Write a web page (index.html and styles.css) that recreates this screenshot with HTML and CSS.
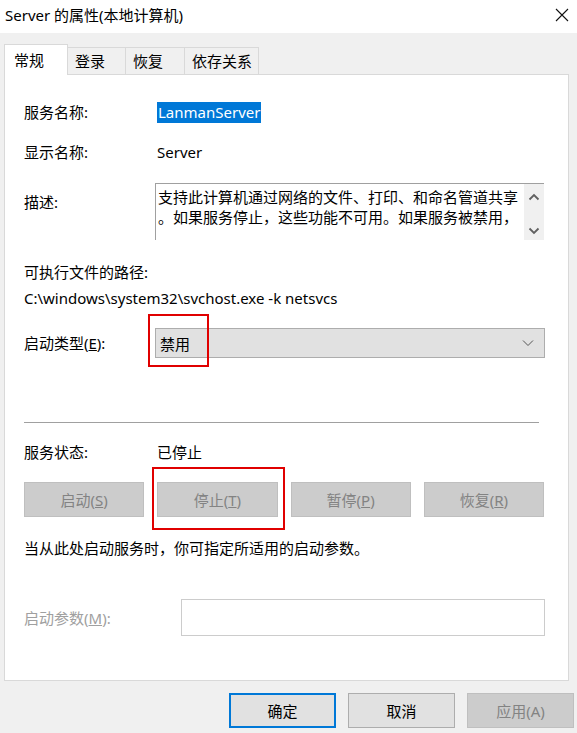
FILE: index.html
```html
<!DOCTYPE html>
<html lang="zh-CN">
<head>
    <meta charset="UTF-8">
    <meta name="viewport" content="width=device-width, initial-scale=1.0">
    <title>Server 的属性(本地计算机)</title>
    <link rel="stylesheet" href="styles.css">
</head>
<body>
    <div class="window">
        <header class="titlebar">
            <span class="title">Server 的属性(本地计算机)</span>
            <svg class="close" width="14" height="14" viewBox="0 0 14 14">
                <path d="M1 1 L13 13 M13 1 L1 13" stroke="#111" stroke-width="1.1" fill="none"/>
            </svg>
        </header>

        <nav class="tabs">
            <div class="tab active">常规</div>
            <div class="tab tab-login">登录</div>
            <div class="tab tab-recover">恢复</div>
            <div class="tab tab-deps">依存关系</div>
        </nav>

        <section class="panel">
            <div class="field">
                <span class="label">服务名称:</span>
                <span class="value"><span class="selected-text">LanmanServer</span></span>
            </div>

            <div class="field gap-18">
                <span class="label">显示名称:</span>
                <span class="value">Server</span>
            </div>

            <div class="field field-top gap-20">
                <span class="label label-desc">描述:</span>
                <div class="desc-box">
                    <div class="desc-text">
                        <div>支持此计算机通过网络的文件、打印、和命名管道共享</div>
                        <div>。如果服务停止，这些功能不可用。如果服务被禁用，</div>
                    </div>
                    <div class="scrollbar">
                        <svg width="12" height="8" viewBox="0 0 12 8"><path d="M1.5 6.5 L6 2 L10.5 6.5" stroke="#606060" stroke-width="1.8" fill="none"/></svg>
                        <svg width="12" height="8" viewBox="0 0 12 8"><path d="M1.5 1.5 L6 6 L10.5 1.5" stroke="#606060" stroke-width="1.8" fill="none"/></svg>
                    </div>
                </div>
            </div>

            <div class="line gap-21">可执行文件的路径:</div>
            <div class="line gap-4">C:\windows\system32\svchost.exe -k netsvcs</div>

            <div class="field gap-19">
                <span class="label">启动类型(<u>E</u>):</span>
                <div class="select">
                    <span>禁用</span>
                    <svg width="12" height="8" viewBox="0 0 12 8"><path d="M1 1.5 L6 6.5 L11 1.5" stroke="#555" stroke-width="1" fill="none"/></svg>
                    <div class="mark mark-type"></div>
                </div>
            </div>

            <div class="separator"></div>

            <div class="field gap-18">
                <span class="label">服务状态:</span>
                <span class="value">已停止</span>
            </div>

            <div class="svc-buttons">
                <button class="btn disabled">启动(<u>S</u>)</button>
                <button class="btn disabled btn-stop">停止(<u>T</u>)<span class="mark mark-stop"></span></button>
                <button class="btn disabled">暂停(<u>P</u>)</button>
                <button class="btn disabled">恢复(<u>R</u>)</button>
            </div>

            <div class="line gap-20">当从此处启动服务时，你可指定所适用的启动参数。</div>

            <div class="field gap-40">
                <span class="label label-param">启动参数(<u>M</u>):</span>
                <div class="param-input"></div>
            </div>
        </section>

        <footer class="actions">
            <button class="btn primary">确定</button>
            <button class="btn">取消</button>
            <button class="btn disabled">应用(A)</button>
        </footer>
    </div>
</body>
</html>
```

FILE: styles.css
```css
/* Estilos generales */
* {
    margin: 0;
    padding: 0;
    box-sizing: border-box;
}

body {
    font-family: "Noto Sans", "Noto Sans CJK SC", sans-serif;
    font-size: 15px;
    color: #000;
    background: #f0f0f0;
}

.window {
    width: 577px;
    height: 733px;
    background: #f0f0f0;
}

/* Barra de título */
.titlebar {
    height: 33px;
    background: #fff;
    display: flex;
    align-items: center;
    justify-content: space-between;
    padding: 0 8px 3px 5px;
}

.title {
    line-height: 20px;
}

/* Pestañas */
.tabs {
    display: flex;
    align-items: flex-end;
    height: 30px;
    margin-top: 11px;
    padding-left: 4px;
}

.tab {
    height: 27px;
    line-height: 26px;
    padding-left: 7px;
    background: #f0f0f0;
    border: 1px solid #d9d9d9;
    border-bottom: none;
    margin-left: -1px;
}

.tab.active {
    position: relative;
    z-index: 1;
    width: 64px;
    height: 31px;
    line-height: 30px;
    padding-left: 9px;
    margin-left: 0;
    margin-bottom: -1px;
    background: #fff;
}

.tab-login { width: 59px; }
.tab-recover { width: 60px; }
.tab-deps { width: 75px; }

/* Panel principal */
.panel {
    width: 565px;
    height: 607px;
    margin-left: 4px;
    background: #fff;
    border: 1px solid #d9d9d9;
    padding: 26px 23px 0 19px;
}

.field {
    display: flex;
    align-items: center;
}

.field-top {
    align-items: flex-start;
}

.label {
    width: 131px;
    flex: none;
    line-height: 22px;
}

.label-desc {
    padding-top: 8px;
}

.label-param {
    width: 157px;
    color: #a0a0a0;
}

.value {
    line-height: 22px;
    padding-left: 2px;
}

.selected-text {
    display: inline-block;
    background: #0078d7;
    color: #fff;
    line-height: 21px;
    padding: 0 1px;
}

.line {
    line-height: 22px;
}

.gap-4 { margin-top: 4px; }
.gap-18 { margin-top: 18px; }
.gap-19 { margin-top: 19px; }
.gap-20 { margin-top: 20px; }
.gap-21 { margin-top: 21px; }
.gap-40 { margin-top: 40px; }

/* Caja de descripción */
.desc-box {
    width: 389px;
    height: 57px;
    display: flex;
    border-top: 1px solid #a0a0a0;
    border-left: 1px solid #a0a0a0;
}

.desc-text {
    flex: 1;
    padding: 3px 0 0 2px;
    line-height: 20px;
    white-space: nowrap;
    overflow: hidden;
}

.scrollbar {
    width: 20px;
    background: #f0f0f0;
    display: flex;
    flex-direction: column;
    justify-content: space-between;
    align-items: center;
    padding: 9px 0 5px;
}

/* Selector de tipo de inicio */
.select {
    position: relative;
    width: 390px;
    height: 30px;
    display: flex;
    align-items: center;
    justify-content: space-between;
    padding: 0 10px 0 4px;
    background: #e1e1e1;
    border: 1px solid #adadad;
}

/* Recuadros rojos */
.mark {
    position: absolute;
    border: 2px solid #e00000;
}

.mark-type {
    left: -8px;
    top: -15px;
    width: 61px;
    height: 53px;
}

.mark-stop {
    left: -6px;
    top: -16px;
    width: 133px;
    height: 63px;
}

.separator {
    width: 515px;
    height: 1px;
    margin-top: 64px;
    background: #a0a0a0;
}

/* Botones */
.svc-buttons {
    display: grid;
    grid-template-columns: repeat(4, 1fr);
    gap: 13px;
    width: 520px;
    margin-top: 19px;
}

.btn {
    height: 35px;
    font-family: inherit;
    font-size: 15px;
    color: #000;
    background: #e1e1e1;
    border: 1px solid #adadad;
}

.btn.disabled {
    color: #838383;
    background: #cccccc;
    border-color: #bfbfbf;
}

.btn-stop {
    position: relative;
}

.btn.primary {
    border: 2px solid #0078d7;
}

.param-input {
    width: 364px;
    height: 37px;
    background: #fff;
    border: 1px solid #cccccc;
}

/* Botones inferiores */
.actions {
    display: flex;
    justify-content: flex-end;
    gap: 12px;
    margin-top: 12px;
    padding-right: 3px;
}

.actions .btn {
    width: 107px;
}
```
